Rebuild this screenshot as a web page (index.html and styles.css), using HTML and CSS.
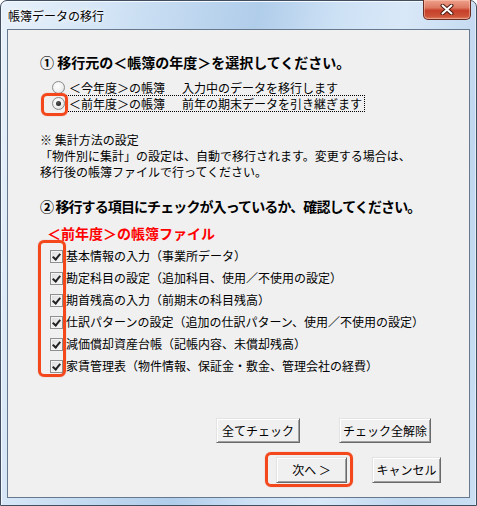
FILE: index.html
```html
<!DOCTYPE html>
<html lang="ja">
<head>
    <meta charset="UTF-8">
    <meta name="viewport" content="width=device-width, initial-scale=1.0">
    <title>帳簿データの移行</title>
    <link rel="stylesheet" href="styles.css">
</head>
<body>
    <div class="window">
        <div class="titlebar">
            <span class="title">帳簿データの移行</span>
            <button class="close" aria-label="閉じる">
                <svg width="14" height="11" viewBox="0 0 14 11">
                    <path d="M2.5 1.5 L11.5 9.5 M11.5 1.5 L2.5 9.5" stroke="#4a1a12" stroke-width="4" stroke-linecap="round"/>
                    <path d="M2.5 1.5 L11.5 9.5 M11.5 1.5 L2.5 9.5" stroke="#fff" stroke-width="2" stroke-linecap="round"/>
                </svg>
            </button>
        </div>
        <div class="frame">
            <div class="client">
                <h1 class="step step-1">① 移行元の＜帳簿の年度＞を選択してください。</h1>

                <div class="radios">
                    <label class="radio">
                        <span class="radio-box"></span>
                        <span class="radio-text">＜今年度＞の帳簿<span class="desc">入力中のデータを移行します</span></span>
                    </label>
                    <label class="radio checked">
                        <span class="radio-box"></span>
                        <span class="radio-text focus">＜前年度＞の帳簿<span class="desc">前年の期末データを引き継ぎます</span></span>
                    </label>
                </div>

                <p class="note">※ 集計方法の設定<br>「物件別に集計」の設定は、自動で移行されます。変更する場合は、<br>移行後の帳簿ファイルで行ってください。</p>

                <h2 class="step step-2">② 移行する項目にチェックが入っているか、確認してください。</h2>
                <p class="sub">＜前年度＞の帳簿ファイル</p>

                <ul class="checks">
                    <li><span class="check-box"></span>基本情報の入力（事業所データ）</li>
                    <li><span class="check-box"></span>勘定科目の設定（追加科目、使用／不使用の設定）</li>
                    <li><span class="check-box"></span>期首残高の入力（前期末の科目残高）</li>
                    <li><span class="check-box"></span>仕訳パターンの設定（追加の仕訳パターン、使用／不使用の設定）</li>
                    <li><span class="check-box"></span>減価償却資産台帳（記帳内容、未償却残高）</li>
                    <li><span class="check-box"></span>家賃管理表（物件情報、保証金・敷金、管理会社の経費）</li>
                </ul>

                <div class="btns btns-check">
                    <button class="btn btn-all">全てチェック</button>
                    <button class="btn btn-clear">チェック全解除</button>
                </div>
                <div class="btns btns-nav">
                    <button class="btn btn-next">次へ ＞</button>
                    <button class="btn btn-cancel">キャンセル</button>
                </div>

                <!-- red markers drawn over the dialog -->
                <span class="mark mark-radio"></span>
                <span class="mark mark-checks"></span>
                <span class="mark mark-next"></span>
            </div>
        </div>
    </div>
</body>
</html>
```

FILE: styles.css
```css
* { box-sizing: border-box; }

body {
    margin: 0;
    width: 477px;
    height: 506px;
    overflow: hidden;
    background: #fff;
    font: 12px/16px "Noto Sans CJK JP", "Noto Sans", sans-serif;
    color: #000;
}

/* window frame */

.window {
    display: flex;
    flex-direction: column;
    width: 477px;
    height: 506px;
    border: 1px solid #404e60;
    border-radius: 7px 7px 0 0;
    background:
        linear-gradient(100deg, #e8f1fa 0%, #d4e5f6 18%, #bfd7ef 34%, #b0cdea 46%, #cde1f5 60%, #d9e8f8 72%, #c0d7ef 88%, #cadff3 100%);
    box-shadow: inset 1px 1px 0 #f4f9ff, inset -1px 0 0 #e1edf9;
}

.titlebar {
    display: flex;
    align-items: flex-start;
    height: 28px;
    flex: none;
}

.title {
    padding: 7px 0 0 7px;
    font-size: 12px;
    line-height: 16px;
    text-shadow: 0 0 6px #fff, 0 0 3px #fff;
}

.close {
    margin: -1px 5px 0 auto;
    width: 48px;
    height: 20px;
    padding: 0;
    display: flex;
    align-items: center;
    justify-content: center;
    border: 1px solid #6a2b22;
    border-top: none;
    border-radius: 0 0 5px 5px;
    background: linear-gradient(#eea08c 0%, #de7a62 40%, #c8402a 55%, #cc5236 85%, #e07e62 100%);
    box-shadow: inset 0 0 0 1px rgba(255, 210, 190, .45);
}

.frame {
    flex: 1;
    display: flex;
    padding: 0 6px 7px 6px;
}

.client {
    position: relative;
    flex: 1;
    padding: 24px 0 0 32px;
    background: #f0f0f0;
    border: 1px solid #66788e;
}

/* sections */

.step {
    margin: 0;
    font-size: 14px;
    line-height: 16px;
    font-weight: bold;
}

.step-2 {
    margin-top: 18px;
    letter-spacing: -0.9px;
}

.radios {
    margin-top: 9px;
    display: flex;
    flex-direction: column;
}

.radio {
    display: flex;
    align-items: center;
    gap: 1px;
    height: 16px;
    padding-left: 12px;
}

.radio-box {
    width: 13px;
    height: 13px;
    border-radius: 50%;
    border: 1px solid #8a8a8a;
    background: radial-gradient(circle at 40% 35%, #ffffff 0%, #f2f2f2 50%, #d4d4d4 100%);
    display: flex;
    align-items: center;
    justify-content: center;
}

.checked .radio-box::after {
    content: "";
    width: 5px;
    height: 5px;
    border-radius: 50%;
    background: radial-gradient(circle at 40% 35%, #5a5a5a, #111);
}

.radio-text {
    padding: 0 2px;
    border: 1px dotted transparent;
    line-height: 15px;
}

.radio-text.focus {
    border-color: #000;
}

.desc {
    margin-left: 17px;
}

.note {
    margin: 21px 0 0;
}

.sub {
    margin: 11px 0 0 7px;
    color: #ff0000;
    font-weight: bold;
    font-size: 14px;
}

.checks {
    list-style: none;
    margin: 4px 0 0;
    padding: 0 0 0 10px;
}

.checks li {
    display: flex;
    align-items: center;
    gap: 3px;
    height: 22px;
}

.check-box {
    flex: none;
    width: 13px;
    height: 13px;
    border: 1px solid #8e8f8f;
    background: linear-gradient(135deg, #dcdcdc, #fafafa);
    box-shadow: inset 0 0 0 1px #f4f4f4;
    position: relative;
}

.check-box::after {
    content: "";
    position: absolute;
    left: 3px;
    top: 1px;
    width: 3px;
    height: 6px;
    border: solid #222;
    border-width: 0 2px 2px 0;
    transform: rotate(40deg);
}

/* buttons */

.btns {
    display: flex;
}

.btns-check {
    margin: 41px 0 0 176px;
    gap: 39px;
}

.btns-nav {
    margin: 14px 0 0 236px;
    gap: 25px;
}

.btn {
    height: 25px;
    padding: 0;
    font: 12px/16px "Noto Sans CJK JP", "Noto Sans", sans-serif;
    color: #000;
    background: #f0f0f0;
    border: 1px solid;
    border-color: #e3e3e3 #696969 #696969 #e3e3e3;
    box-shadow: inset 1px 1px #fff, inset -1px -1px #a0a0a0;
}

.btn-all { width: 84px; }
.btn-clear { width: 92px; }
.btn-next { width: 71px; height: 26px; }
.btn-cancel { width: 69px; height: 26px; }

/* annotation overlays */

.mark {
    position: absolute;
    border: 3px solid #f4471c;
    border-radius: 6px;
    box-shadow: 0 0 1px rgba(200, 40, 0, .5);
}

.mark-radio { left: 33px; top: 63px; width: 27px; height: 23px; }
.mark-checks { left: 30px; top: 210px; width: 28px; height: 137px; }
.mark-next { left: 257px; top: 422px; width: 88px; height: 35px; }
```
